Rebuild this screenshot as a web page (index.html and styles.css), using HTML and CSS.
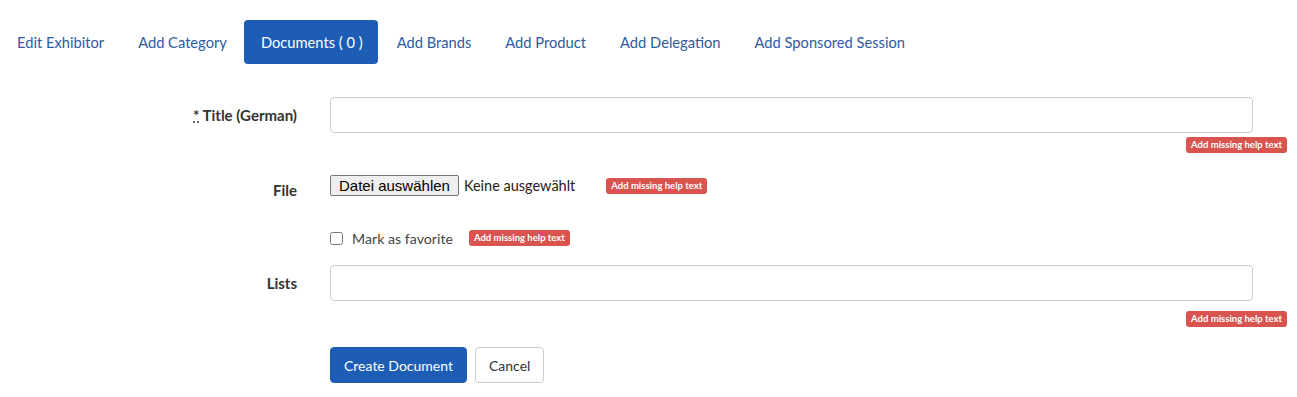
FILE: index.html
```html
<!DOCTYPE html>
<html>
  <head>
    <meta charset="utf-8">
    <link rel="stylesheet" href="styles.css">
  </head>
  <body>
    <ul class="tabs">
      <li><a href="#">Edit Exhibitor</a></li>
      <li><a href="#">Add Category</a></li>
      <li class="active"><a href="#">Documents ( 0 )</a></li>
      <li><a href="#">Add Brands</a></li>
      <li><a href="#">Add Product</a></li>
      <li><a href="#">Add Delegation</a></li>
      <li><a href="#">Add Sponsored Session</a></li>
    </ul>

    <form class="doc-form">
      <div class="form-row row-title">
        <label class="form-label" for="title"><abbr title="required">*</abbr> Title (German)</label>
        <div class="form-field">
          <input type="text" id="title" class="text-input">
          <span class="help-badge">Add missing help text</span>
        </div>
      </div>

      <div class="form-row row-file">
        <label class="form-label">File</label>
        <div class="form-field inline-field">
          <button type="button" class="file-btn">Datei auswählen</button>
          <span class="file-name">Keine ausgewählt</span>
          <span class="help-badge badge-inline">Add missing help text</span>
        </div>
      </div>

      <div class="form-row row-check">
        <span class="form-label"></span>
        <div class="form-field inline-field">
          <label class="check-label"><input type="checkbox" class="check"> Mark as favorite</label>
          <span class="help-badge badge-check">Add missing help text</span>
        </div>
      </div>

      <div class="form-row row-lists">
        <label class="form-label" for="lists">Lists</label>
        <div class="form-field">
          <input type="text" id="lists" class="text-input">
          <span class="help-badge badge-lists">Add missing help text</span>
        </div>
      </div>

      <div class="form-row row-actions">
        <span class="form-label"></span>
        <div class="form-field inline-field">
          <button type="submit" class="btn btn-primary">Create Document</button>
          <button type="button" class="btn btn-default">Cancel</button>
        </div>
      </div>
    </form>
  </body>
</html>
```

FILE: styles.css
```css
:root {
  --primary: #1d5db5;
  --link: #2d5aa3;
  --text: #333333;
  --border: #cccccc;
  --danger: #d9534f;
  --radius: 4px;
}

body {
  margin: 0;
  font-family: Lato, "Noto Sans", sans-serif;
  font-size: 14.5px;
  color: var(--text);
  background: #ffffff;
}

/* tabs */
.tabs {
  display: flex;
  list-style: none;
  margin: 20px 0 0;
  padding: 0;
  font-size: 14.7px;
}

.tabs li + li {
  margin-left: 2px;
}

.tabs a {
  display: block;
  height: 44px;
  line-height: 44px;
  padding: 0 15px 0 17px;
  color: var(--link);
  text-decoration: none;
  border-radius: var(--radius);
}

.tabs .active a {
  background: var(--primary);
  color: #ffffff;
}

/* form */
.doc-form {
  margin-top: 33px;
  padding-right: 10px;
}

.form-row {
  display: grid;
  grid-template-columns: 297px 1fr;
  column-gap: 33px;
  align-items: start;
}

.form-label {
  text-align: right;
  font-weight: bold;
  font-size: 15px;
  color: var(--text);
}

.form-label abbr {
  text-decoration: underline dotted;
  cursor: help;
}

.form-field {
  display: flex;
  flex-direction: column;
  align-items: flex-end;
}

.inline-field {
  flex-direction: row;
  align-items: center;
}

.text-input {
  align-self: flex-start;
  width: 923px;
  height: 36px;
  box-sizing: border-box;
  border: 1px solid var(--border);
  border-radius: var(--radius);
  margin: 0;
  padding: 6px 12px;
  font: inherit;
}

.help-badge {
  display: inline-block;
  height: 16px;
  line-height: 16px;
  padding: 0 5px;
  border-radius: 3px;
  background: var(--danger);
  color: #ffffff;
  font-size: 9.5px;
  font-weight: bold;
  white-space: nowrap;
}

.row-title .form-label {
  line-height: 36px;
}

.row-title .help-badge {
  margin-top: 4px;
}

.row-file {
  margin-top: 22px;
}

.row-file .form-label {
  padding-top: 5px;
  line-height: 20px;
}

.file-btn {
  height: 21px;
  padding: 0 8px;
  border: 1px solid #767676;
  border-radius: 2px;
  background: #efefef;
  color: #000000;
  font-family: "Liberation Sans", Arial, sans-serif;
  font-size: 15px;
}

.file-name {
  margin-left: 5px;
  font-size: 14.5px;
  color: #222222;
}

.badge-inline {
  margin-left: 31px;
}

.row-check {
  margin-top: 28px;
}

.check-label {
  display: flex;
  align-items: center;
  height: 20px;
  color: #444444;
  font-size: 14.2px;
}

.check {
  width: 13px;
  height: 13px;
  margin: 0 9px 0 0;
}

.badge-check {
  margin-left: 16px;
}

.row-lists {
  margin-top: 17px;
}

.row-lists .form-label {
  line-height: 36px;
}

.badge-lists {
  margin-top: 10px;
}

.row-actions {
  margin-top: 20px;
}

.btn {
  height: 36px;
  padding: 0 13px;
  border-radius: var(--radius);
  font-family: inherit;
  font-size: 14px;
  cursor: pointer;
}

.btn-primary {
  background: var(--primary);
  border: 1px solid var(--primary);
  color: #ffffff;
}

.btn-default {
  margin-left: 8px;
  background: #ffffff;
  border: 1px solid var(--border);
  color: var(--text);
}
```
